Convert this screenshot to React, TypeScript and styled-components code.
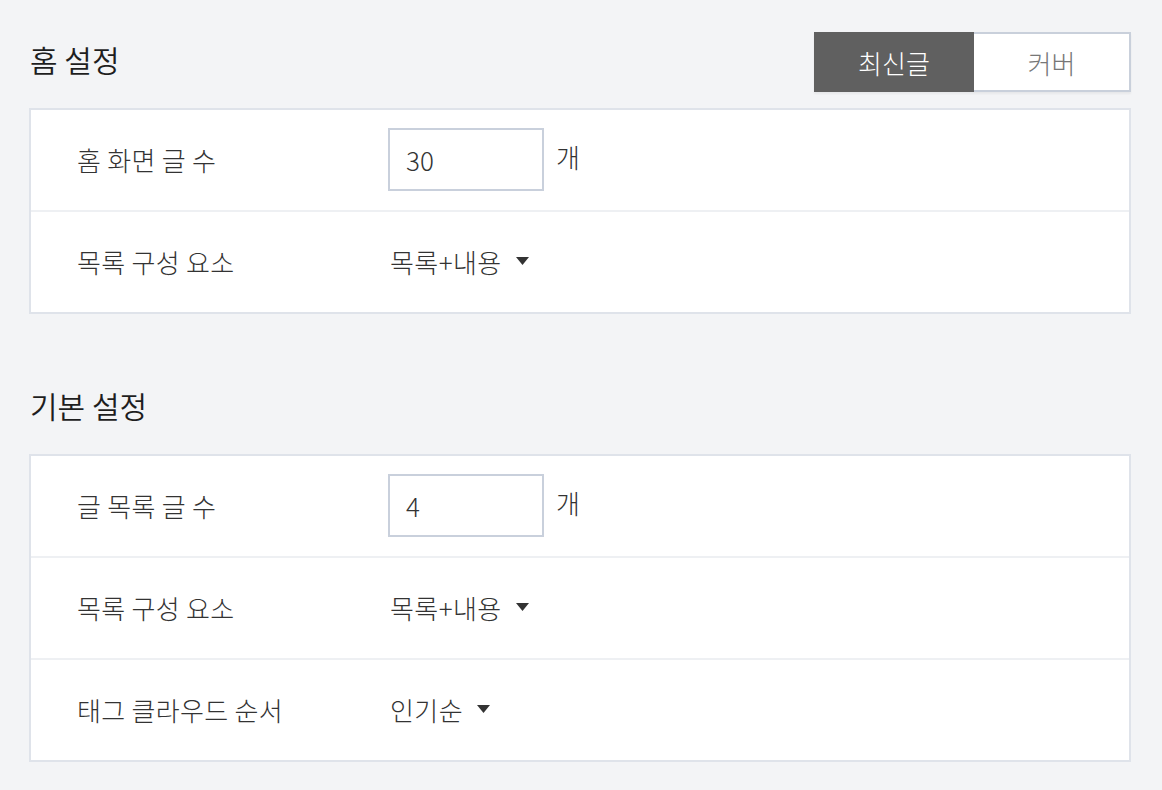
import styled, { createGlobalStyle } from "styled-components";

const GlobalStyle = createGlobalStyle`
  html, body {
    margin: 0;
    padding: 0;
    background: #f3f4f6;
    font-family: "Noto Sans CJK KR", "Noto Sans", sans-serif;
  }
`;

const Page = styled.div`
  padding: 32px 31px 0 29px;
  display: flex;
  flex-direction: column;
  gap: 64px;
`;

const Section = styled.section`
  display: flex;
  flex-direction: column;
  gap: 16px;
`;

const Header = styled.div`
  height: 60px;
  display: flex;
  align-items: center;
  justify-content: space-between;
`;

const Title = styled.h2`
  margin: 0 0 6px;
  font-size: 30px;
  font-weight: 350;
  color: #1e1e1e;
  padding-left: 1px;
`;

const Toggle = styled.div`
  display: flex;
  height: 60px;
  box-shadow: 0 2px 2px rgba(0, 0, 0, 0.05);
`;

const ToggleButton = styled.button<{ $active?: boolean }>`
  width: ${(p) => (p.$active ? "160px" : "157px")};
  height: 60px;
  margin: 0;
  font-family: inherit;
  font-size: 26px;
  font-weight: 300;
  cursor: pointer;
  border: ${(p) => (p.$active ? "none" : "2px solid #c9d0db")};
  border-left: none;
  background: ${(p) => (p.$active ? "#606060" : "#ffffff")};
  color: ${(p) => (p.$active ? "#ffffff" : "#777777")};
`;

const Card = styled.div`
  background: #fff;
  border: 2px solid #dfe3ea;
`;

const Row = styled.div`
  height: 98px;
  padding-bottom: 2px;
  display: grid;
  grid-template-columns: 311px 1fr;
  align-items: center;
  padding-left: 46px;
  & + & {
    border-top: 2px solid #eef0f3;
  }
`;

const Label = styled.div`
  font-size: 26px;
  font-weight: 300;
  letter-spacing: 0.3px;
  color: #333;
`;

const Value = styled.div`
  display: flex;
  align-items: center;
`;

const NumberInput = styled.input`
  box-sizing: border-box;
  width: 156px;
  height: 63px;
  border: 2px solid #c9d0dc;
  padding: 0 0 0 16px;
  font-family: inherit;
  font-size: 26px;
  font-weight: 300;
  color: #333;
  outline: none;
`;

const Unit = styled.span`
  font-size: 26px;
  font-weight: 300;
  color: #333;
  margin-left: 12px;
  margin-top: -6px;
`;

const Select = styled.div`
  display: flex;
  align-items: center;
  gap: 14px;
  font-size: 26px;
  font-weight: 300;
  letter-spacing: 0.4px;
  color: #333;
  padding-left: 2px;
  cursor: pointer;
`;

const Caret = () => (
  <svg width="13" height="8" viewBox="0 0 13 8">
    <path d="M0 0 L13 0 L6.5 8 Z" fill="#333" />
  </svg>
);

export default function App() {
  return (
    <>
      <GlobalStyle />
      <Page>
        <Section>
          <Header>
            <Title>홈 설정</Title>
            <Toggle>
              <ToggleButton $active>최신글</ToggleButton>
              <ToggleButton>커버</ToggleButton>
            </Toggle>
          </Header>
          <Card>
            <Row>
              <Label>홈 화면 글 수</Label>
              <Value>
                <NumberInput defaultValue="30" />
                <Unit>개</Unit>
              </Value>
            </Row>
            <Row>
              <Label>목록 구성 요소</Label>
              <Select>
                목록+내용 <Caret />
              </Select>
            </Row>
          </Card>
        </Section>
        <Section>
          <Header>
            <Title>기본 설정</Title>
          </Header>
          <Card>
            <Row>
              <Label>글 목록 글 수</Label>
              <Value>
                <NumberInput defaultValue="4" />
                <Unit>개</Unit>
              </Value>
            </Row>
            <Row>
              <Label>목록 구성 요소</Label>
              <Select>
                목록+내용 <Caret />
              </Select>
            </Row>
            <Row>
              <Label>태그 클라우드 순서</Label>
              <Select>
                인기순 <Caret />
              </Select>
            </Row>
          </Card>
        </Section>
      </Page>
    </>
  );
}
